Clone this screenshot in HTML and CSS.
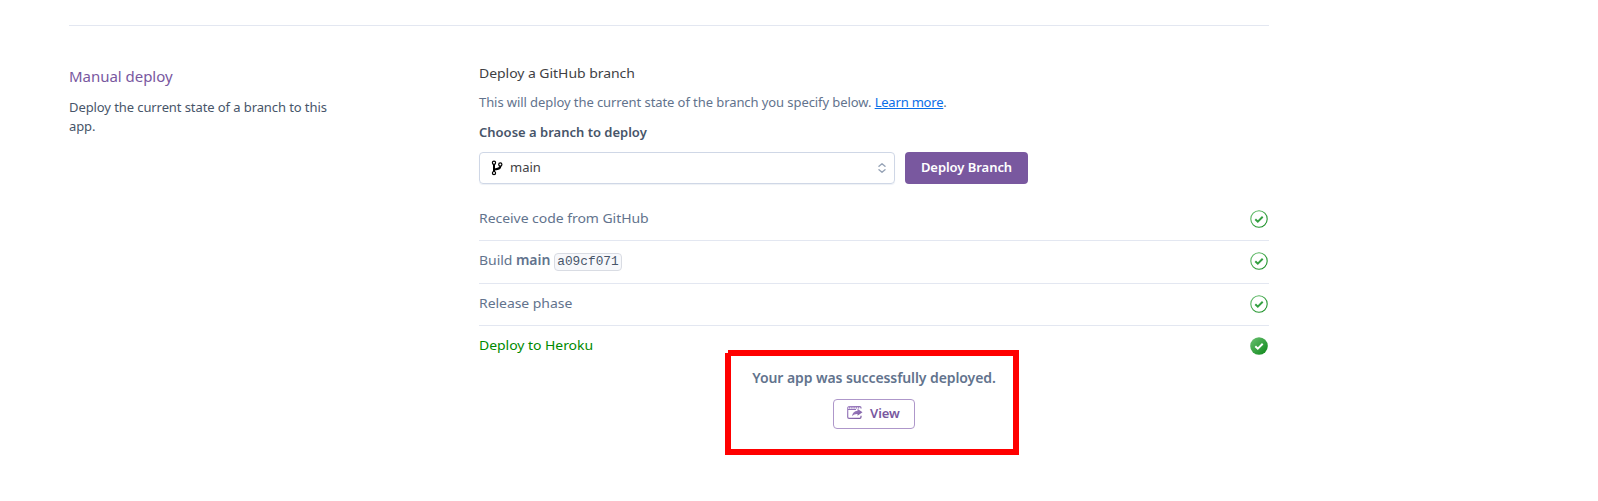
FILE: index.html
```html
<!DOCTYPE html>
<html lang="en">
<head>
<meta charset="utf-8">
<title>Manual deploy</title>
<link rel="stylesheet" href="styles.css">
</head>
<body>
<svg class="defs" width="0" height="0" aria-hidden="true">
  <defs>
    <linearGradient id="green" x1="0" y1="0" x2="1" y2="1"><stop offset="0" stop-color="#6cc174"/><stop offset="1" stop-color="#0b8717"/></linearGradient>
    <linearGradient id="purple" x1="0" y1="0" x2="1" y2="1"><stop offset="0" stop-color="#a486c6"/><stop offset="1" stop-color="#79589f"/></linearGradient>
  </defs>
</svg>
<main class="page">
  <aside class="intro">
    <h2 class="title">Manual deploy</h2>
    <p class="description">Deploy the current state of a branch to this app.</p>
  </aside>
  <section class="content">
    <h3 class="heading"><span class="wide">Deploy a GitHub branch</span></h3>
    <p class="hint">This will deploy the current state of the branch you specify below. <a class="link" href="#">Learn more</a>.</p>
    <div class="label">Choose a branch to deploy</div>
    <div class="controls">
      <div class="select">
        <svg class="branch" width="12" height="16" viewBox="0 0 12 16" fill="none" stroke="#000">
          <path d="M3 4v8M9.3 5v1.6c0 1.8-1.6 2.2-5.8 2.9" stroke-width="2"/>
          <circle cx="3" cy="2.7" r="1.6" fill="#fff" stroke-width="1.2"/><circle cx="9.3" cy="4.4" r="1.6" fill="#fff" stroke-width="1.2"/><circle cx="3" cy="13.1" r="1.6" fill="#fff" stroke-width="1.2"/>
        </svg>
        <span class="value">main</span>
        <svg class="arrows" width="8" height="10" viewBox="0 0 8 10" fill="none" stroke="#96a3b6" stroke-width="1.4" stroke-linecap="round" stroke-linejoin="round"><path d="M1 3.3 4 .8l3 2.5M1 6.7l3 2.5 3-2.5"/></svg>
      </div>
      <button class="deploy">Deploy Branch</button>
    </div>
    <div class="steps">
      <div class="step"><span class="text"><span class="wide">Receive code from GitHub</span></span>
        <svg class="check" width="18" height="18" viewBox="0 0 18 18" fill="none"><circle cx="9" cy="9" r="8.2" stroke="url(#green)" stroke-width="1.1"/><path d="m5.3 9.2 2.5 2.4 4.9-4.8" stroke="#35a042" stroke-width="2"/></svg></div>
      <div class="step"><span class="text"><span class="wide">Build</span> <b class="name">main</b><code class="hash">a09cf071</code></span>
        <svg class="check" width="18" height="18" viewBox="0 0 18 18" fill="none"><circle cx="9" cy="9" r="8.2" stroke="url(#green)" stroke-width="1.1"/><path d="m5.3 9.2 2.5 2.4 4.9-4.8" stroke="#35a042" stroke-width="2"/></svg></div>
      <div class="step"><span class="text"><span class="wide">Release phase</span></span>
        <svg class="check" width="18" height="18" viewBox="0 0 18 18" fill="none"><circle cx="9" cy="9" r="8.2" stroke="url(#green)" stroke-width="1.1"/><path d="m5.3 9.2 2.5 2.4 4.9-4.8" stroke="#35a042" stroke-width="2"/></svg></div>
      <div class="step done"><span class="text"><span class="wide">Deploy to Heroku</span></span>
        <svg class="check" width="18" height="18" viewBox="0 0 18 18" fill="none"><circle cx="9" cy="9" r="8.8" fill="url(#green)"/><path d="m5.3 9.2 2.5 2.4 4.9-4.8" stroke="#fff" stroke-width="2"/></svg></div>
    </div>
    <div class="result">
      <p class="message">Your app was successfully deployed.</p>
      <button class="view">
        <svg width="16" height="14" viewBox="0 0 16 14" fill="none"><path d="M14 2.5V2a1.3 1.3 0 0 0-1.3-1.3H2A1.3 1.3 0 0 0 .7 2v9A1.3 1.3 0 0 0 2 12.3h10.7A1.3 1.3 0 0 0 14 11v-1.2" stroke="url(#purple)" stroke-width="1.2"/><path d="M2 1.9h11" stroke="#8f6eb5" stroke-width="1.3" stroke-dasharray="1.4 .8"/><path d="M1 3.5h8" stroke="#9474b8" stroke-width="1"/><path d="M10.5 2.8 15.5 6.3l-5 3.5V7.9c-2.3-.1-3.9.5-5.4 2.3.3-3.3 2-5.2 5.4-5.5z" fill="url(#purple)"/></svg>
        <span>View</span>
      </button>
    </div>
    <svg class="marker" width="294" height="105" viewBox="0 0 294 105"><path d="M3 3h288v99H3z" fill="none" stroke="#f00" stroke-width="6"/><path d="M0 0h3v3H0z" fill="#fff"/></svg>
  </section>
</main>
</body>
</html>
```
FILE: styles.css
```css
* { box-sizing: border-box; }
body { margin: 0; padding: 25px 0 0 69px; min-height: 501px; background: #fff; font: 13px/19.5px "Noto Sans", sans-serif; color: #475569; }
h2, h3, p { margin: 0; font-weight: 400; }
button { font: 600 13px/18px "Noto Sans", sans-serif; border-radius: 4px; margin: 0; }
.defs { position: absolute; }
.page { display: grid; grid-template-columns: 410px 790px; width: 1200px; border-top: 1px solid #e3e7f1; padding-top: 37px; }
.intro { padding-top: 2px; width: 270px; }
.title { font-size: 15px; line-height: 22px; color: #79589f; letter-spacing: -0.03px; }
.description { margin-top: 11px; line-height: 19px; letter-spacing: -0.09px; }
.content { position: relative; }
.heading { font-size: 14px; letter-spacing: -0.05px; line-height: 20px; color: #3f3f44; }
.wide { display: inline-block; transform: scaleY(0.94); transform-origin: 0 75%; }
.hint { margin-top: 9px; line-height: 20px; color: #62738d; letter-spacing: -0.08px; }
.link { color: #0a6ee8; letter-spacing: -0.2px; }
.label { margin-top: 10px; line-height: 20px; font-weight: 600; }
.controls { display: flex; gap: 10px; margin-top: 10px; }
.select { display: flex; align-items: center; width: 416px; height: 32px; padding: 0 8px 0 11px; border: 1px solid #cfd7e6; border-radius: 4px; box-shadow: 0 1px 1px #eef1f6; }
.value { flex: 1; margin-left: 7px; color: #3f3f44; }
.deploy { width: 123px; height: 32px; padding: 0 0 2px; border: 0; background: #79589f; color: #fff; letter-spacing: -0.05px; }
.steps { margin-top: 14px; }
.step { display: flex; justify-content: space-between; align-items: center; height: 43px; padding: 0 1px 2px 0; border-bottom: 1px solid #e3e7f1; font-size: 14px; letter-spacing: -0.05px; line-height: 20px; color: #62738d; }
.step:first-child { padding-bottom: 0; }
.step:nth-child(3) { height: 42px; padding-bottom: 1px; }
.step.done { height: 42px; border: 0; color: #008a00; }
.text { padding-bottom: 2px; }
.check { display: block; }
.name { font-weight: 600; }
.hash { display: inline-block; height: 18px; margin-left: 4px; padding: 0 2px; border: 1px solid #d9dce3; border-radius: 4px; background: #f7f8fb; color: #475569; font: 12.8px/16px "Liberation Mono", monospace; letter-spacing: 0; }
.result { display: flex; flex-direction: column; align-items: center; }
.message { font-size: 14px; line-height: 20px; font-weight: 600; color: #62738d; letter-spacing: -0.09px; }
.view { display: flex; align-items: center; gap: 7px; width: 82px; height: 30px; margin-top: 11px; padding: 0 0 2px 13px; border: 1px solid #ae97ca; background: #fff; color: #79589f; letter-spacing: -0.05px; }
.marker { position: absolute; left: 246px; top: 287px; }
```
